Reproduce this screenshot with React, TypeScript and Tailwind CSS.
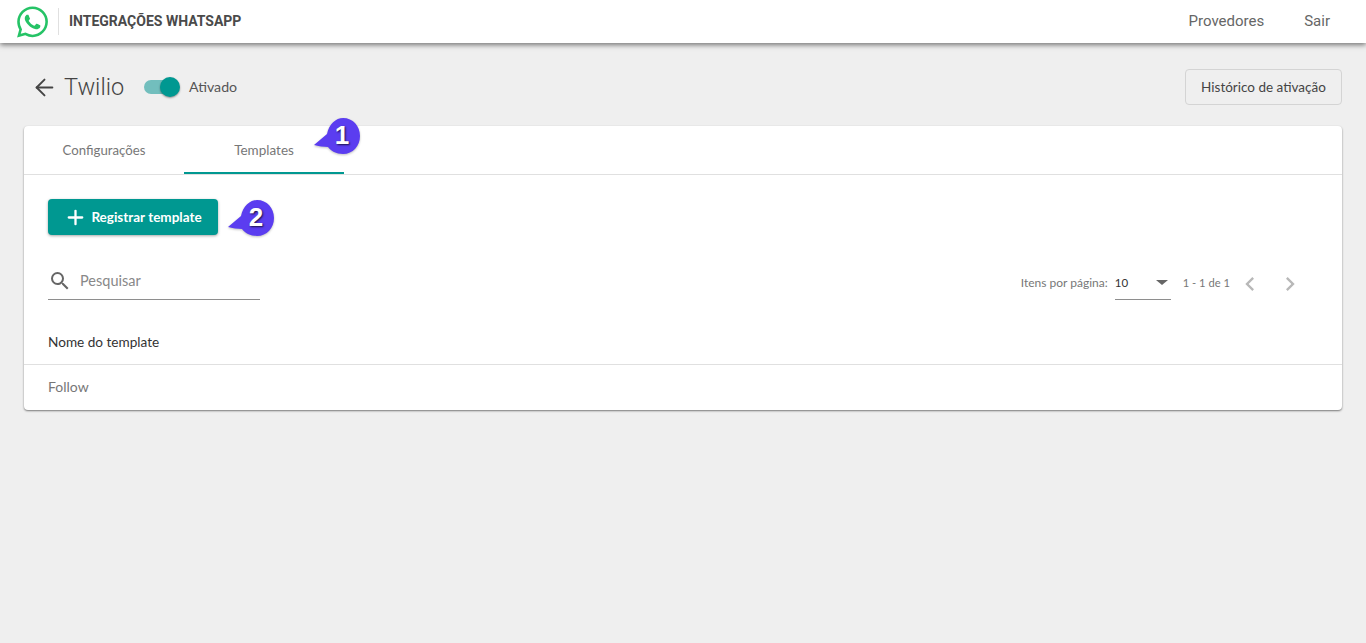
import { ArrowLeft, Plus } from 'lucide-react';

const WHATSAPP_PATH =
  'M17.472 14.382c-.297-.149-1.758-.867-2.03-.967-.273-.099-.471-.148-.67.15-.197.297-.767.966-.94 1.164-.173.199-.347.223-.644.075-.297-.15-1.255-.463-2.39-1.475-.883-.788-1.48-1.761-1.653-2.059-.173-.297-.018-.458.13-.606.134-.133.298-.347.446-.52.149-.174.198-.298.298-.497.099-.198.05-.371-.025-.52-.075-.149-.669-1.612-.916-2.207-.242-.579-.487-.5-.669-.51-.173-.008-.371-.01-.57-.01-.198 0-.52.074-.792.372-.272.297-1.04 1.016-1.04 2.479 0 1.462 1.065 2.875 1.213 3.074.149.198 2.096 3.2 5.077 4.487.709.306 1.262.489 1.694.625.712.227 1.36.195 1.871.118.571-.085 1.758-.719 2.006-1.413.248-.694.248-1.289.173-1.413-.074-.124-.272-.198-.57-.347m-5.421 7.403h-.004a9.87 9.87 0 01-5.031-1.378l-.361-.214-3.741.982.998-3.648-.235-.374a9.86 9.86 0 01-1.51-5.26c.001-5.45 4.436-9.884 9.888-9.884 2.64 0 5.122 1.03 6.988 2.898a9.825 9.825 0 012.893 6.994c-.003 5.45-4.437 9.884-9.885 9.884m8.413-18.297A11.815 11.815 0 0012.05 0C5.495 0 .16 5.335.157 11.892c0 2.096.547 4.142 1.588 5.945L.057 24l6.305-1.654a11.882 11.882 0 005.683 1.448h.005c6.554 0 11.89-5.335 11.893-11.893a11.821 11.821 0 00-3.48-8.413z';

function Callout({ n, className }: { n: number; className: string }) {
  return (
    <div className={`absolute w-[47px] h-[36px] ${className}`}>
      <svg width="47" height="36" viewBox="0 0 47 36" className="absolute left-0 top-0 drop-shadow-[0_1px_1px_rgba(0,0,0,0.25)]">
        <path d="M0 27 L13 16 C15 6 22 0 29 0 C39 0 46 8 46 18 C46 28 39 36 29 36 C22 36 17 33 14 29 C10 29 4 28 0 27 Z" fill="#5b3df0" />
      </svg>
      <span className="absolute left-[9px] right-0 top-[-1px] text-center text-[26px] font-bold leading-[36px] text-white font-['Liberation_Sans',sans-serif] [text-shadow:1px_1px_2px_rgba(0,0,0,0.7)]">
        {n}
      </span>
    </div>
  );
}

export default function App() {
  return (
    <div className="min-h-[643px] bg-[#efefef] font-['Lato',sans-serif]">
      {/* Top bar */}
      <header className="h-[43px] bg-white flex items-center pl-[17px] pr-[36px] shadow-[0_2px_5px_rgba(0,0,0,0.5)] font-['Roboto',sans-serif]">
        <svg width="31" height="32" viewBox="0 0 24 24" fill="#25c366">
          <path d={WHATSAPP_PATH} />
        </svg>
        <div className="ml-[10px] h-[27px] w-px bg-[#e0e0e0]" />
        <span className="ml-[10px] text-[14px] font-bold text-[#4a4a4a]">INTEGRAÇÕES WHATSAPP</span>
        <nav className="ml-auto flex items-center gap-[40px] text-[15px] text-[#666]">
          <span>Provedores</span>
          <span>Sair</span>
        </nav>
      </header>

      <main className="px-[24px] pt-[26px]">
        {/* Title row */}
        <div className="flex items-center h-[36px] mb-[21px]">
          <ArrowLeft size={27} strokeWidth={1.7} className="ml-[7px] text-[#444]" />
          <span className="ml-[6px] pt-[1px] w-[60px] text-[23.5px] text-[#444] font-['Roboto',sans-serif] font-light">Twilio</span>
          <div className="relative ml-[20px] w-[36px] h-[20px] flex items-center">
            <div className="w-[34px] h-[14px] rounded-full bg-[#72bebd]" />
            <div className="absolute right-0 w-[20px] h-[20px] rounded-full bg-[#009891] shadow-[0_1px_2px_rgba(0,0,0,0.4)]" />
          </div>
          <span className="ml-[9px] text-[14.2px] text-[#555]">Ativado</span>
          <button className="ml-auto h-[36px] w-[157px] rounded border border-[#d4d4d4] text-[13.5px] text-[#444]">
            Histórico de ativação
          </button>
        </div>

        {/* Card */}
        <section className="relative bg-white rounded shadow-[0_1px_2px_rgba(0,0,0,0.5)]">
          <div className="flex h-[49px] border-b border-[#e0e0e0] text-[#777]">
            <div className="w-[160px] pt-[2px] flex items-center justify-center text-[13.2px]">Configurações</div>
            <div className="w-[160px] h-[48px] pt-[2px] flex items-center justify-center border-b-2 border-[#009891] text-[13.5px]">Templates</div>
          </div>
          <Callout n={1} className="left-[290px] top-[-8px]" />

          <div className="pt-[24px] px-[24px]">
            <button className="h-[36px] w-[170px] rounded bg-[#009891] text-white text-[13.5px] font-bold flex items-center justify-center gap-[4px] shadow-[0_1px_3px_rgba(0,0,0,0.35)]">
              <Plus size={23} strokeWidth={2.4} />
              Registrar template
            </button>
          </div>
          <Callout n={2} className="left-[204px] top-[74px]" />

          {/* Search and paginator */}
          <div className="flex items-start justify-between mt-[27px] pl-[24px] pr-[38px]">
            <div className="w-[212px] h-[38px] border-b border-[#8e8e8e] flex items-center">
              <svg width="24" height="24" viewBox="0 0 24 24" fill="#666">
                <path d="M15.5 14h-.79l-.28-.27A6.471 6.471 0 0 0 16 9.5 6.5 6.5 0 1 0 9.5 16c1.61 0 3.09-.59 4.23-1.57l.27.28v.79l5 4.99L20.49 19l-4.99-5zm-6 0C7.01 14 5 11.99 5 9.5S7.01 5 9.5 5 14 7.01 14 9.5 11.99 14 9.5 14z" />
              </svg>
              <span className="ml-[8px] text-[14.5px] text-[#888]">Pesquisar</span>
            </div>
            <div className="flex items-center h-[38px] pt-[4px] text-[#777]">
              <span className="text-[12px]">Itens por página:</span>
              <div className="ml-[7px] w-[56px] h-[34px] border-b border-[#8e8e8e] flex items-center justify-between pr-[3px] text-[11.5px] text-[#333]">
                <span>10</span>
                <span className="w-0 h-0 border-x-[6px] border-x-transparent border-t-[5px] border-t-[#666]" />
              </div>
              <span className="ml-[12px] text-[11.2px]">1 - 1 de 1</span>
              <svg width="28" height="28" viewBox="0 0 24 24" fill="#b8b8b8" className="ml-[6px] mt-[2px]">
                <path d="M15.41 7.41L14 6l-6 6 6 6 1.41-1.41L10.83 12z" />
              </svg>
              <svg width="28" height="28" viewBox="0 0 24 24" fill="#b8b8b8" className="ml-[12px] mt-[2px]">
                <path d="M10 6L8.59 7.41 13.17 12l-4.58 4.59L10 18l6-6z" />
              </svg>
            </div>
          </div>

          {/* Table */}
          <div className="mt-[21px] h-[44px] pl-[24px] flex items-center border-b border-[#e0e0e0] text-[13.6px] text-[#333]">
            Nome do template
          </div>
          <div className="h-[45px] pb-[2px] pl-[24px] flex items-center text-[14px] text-[#777]">Follow</div>
        </section>
      </main>
    </div>
  );
}
